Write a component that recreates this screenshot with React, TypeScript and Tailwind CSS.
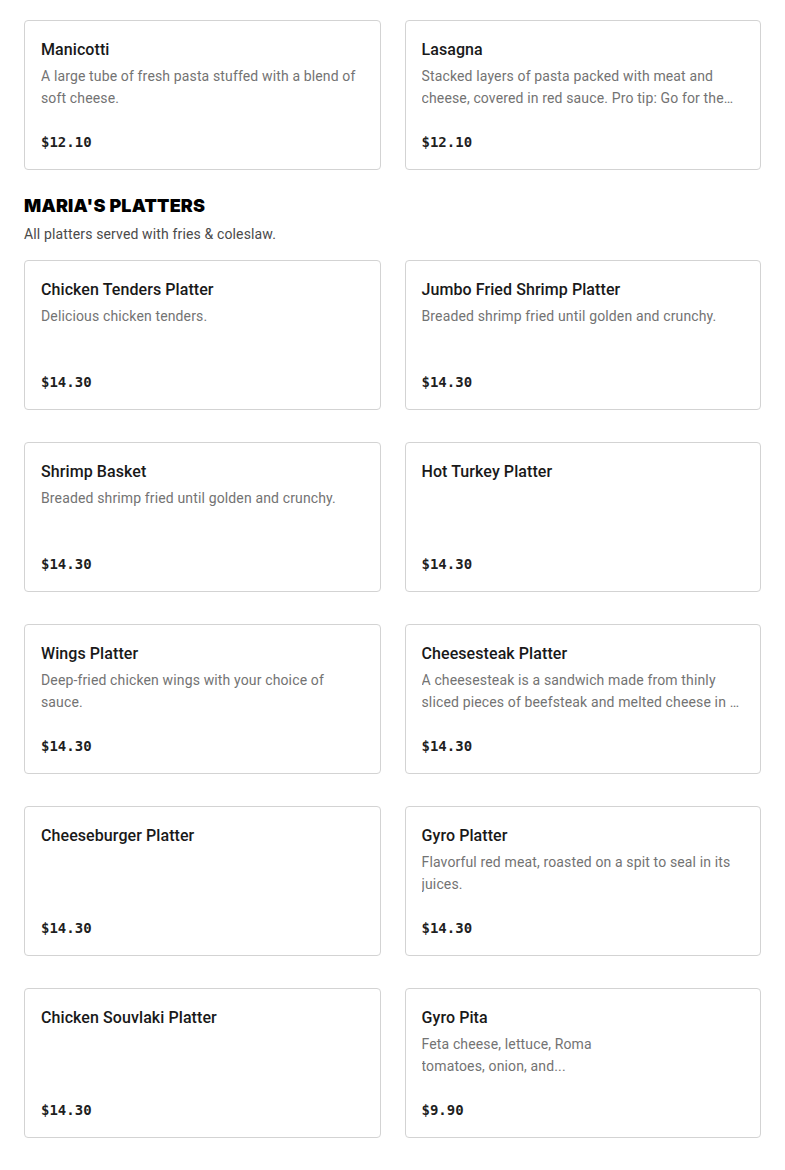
import React from 'react';

interface MenuItem {
  name: string;
  description?: React.ReactNode;
  price: string;
}

const pastas: MenuItem[] = [
  { name: 'Manicotti', description: 'A large tube of fresh pasta stuffed with a blend of soft cheese.', price: '$12.10' },
  {
    name: 'Lasagna',
    description: 'Stacked layers of pasta packed with meat and cheese, covered in red sauce. Pro tip: Go for the meat sauce on the side.',
    price: '$12.10'
  }
];

const platters: MenuItem[] = [
  { name: 'Chicken Tenders Platter', description: 'Delicious chicken tenders.', price: '$14.30' },
  { name: 'Jumbo Fried Shrimp Platter', description: 'Breaded shrimp fried until golden and crunchy.', price: '$14.30' },
  { name: 'Shrimp Basket', description: 'Breaded shrimp fried until golden and crunchy.', price: '$14.30' },
  { name: 'Hot Turkey Platter', price: '$14.30' },
  { name: 'Wings Platter', description: 'Deep-fried chicken wings with your choice of sauce.', price: '$14.30' },
  {
    name: 'Cheesesteak Platter',
    description: 'A cheesesteak is a sandwich made from thinly sliced pieces of beefsteak and melted cheese in a long hoagie roll.',
    price: '$14.30'
  },
  { name: 'Cheeseburger Platter', price: '$14.30' },
  { name: 'Gyro Platter', description: 'Flavorful red meat, roasted on a spit to seal in its juices.', price: '$14.30' },
  { name: 'Chicken Souvlaki Platter', price: '$14.30' },
  {
    name: 'Gyro Pita',
    description: (
      <>
        Feta cheese, lettuce, Roma
        <br />
        tomatoes, onion, and...
      </>
    ),
    price: '$9.90'
  }
];

const ItemCard = ({ item }: { item: MenuItem }) => (
  <div className="flex h-[150px] flex-col rounded-[4px] border border-[#d3d3d3] bg-white px-4 pt-[17px] pb-[17px]">
    <h3 className="text-[16px] leading-6 font-medium tracking-[0.005em] text-[#191919]">{item.name}</h3>
    {item.description && (
      <p className="mt-[3px] line-clamp-2 text-[14px] leading-[22px] tracking-[0.01em] text-[#737373]">{item.description}</p>
    )}
    <div className="mt-auto font-['DejaVu_Sans_Mono',monospace] text-[14px] leading-5 font-bold text-[#1f1f1f]">
      {item.price}
    </div>
  </div>
);

export default function App() {
  return (
    <div className="min-h-screen bg-white px-6 pt-5 font-['Roboto',sans-serif]">
      {/* Pasta row carried over from previous section */}
      <div className="grid grid-cols-2 gap-x-6">
        {pastas.map(item => (
          <ItemCard key={item.name} item={item} />
        ))}
      </div>

      {/* Maria's Platters */}
      <div className="mt-[24px]">
        <h2 className="font-['Inter',sans-serif] text-[18px] leading-6 font-black tracking-[0.01em] text-black">
          MARIA'S PLATTERS
        </h2>
        <p className="mt-1.5 text-[14px] leading-5 tracking-[0.01em] text-[#4a4a4a]">All platters served with fries &amp; coleslaw.</p>
      </div>

      <div className="mt-[16px] grid grid-cols-2 gap-x-6 gap-y-8 pb-8">
        {platters.map(item => (
          <ItemCard key={item.name} item={item} />
        ))}
      </div>
    </div>
  );
}
